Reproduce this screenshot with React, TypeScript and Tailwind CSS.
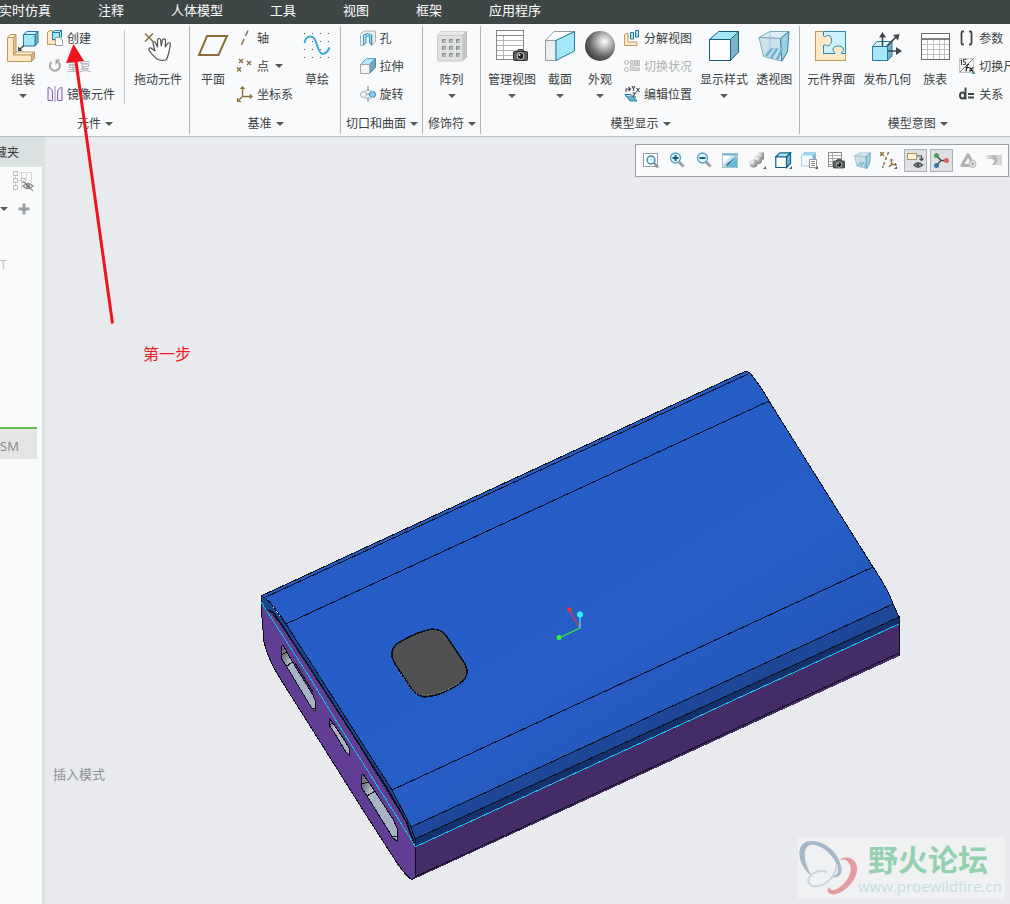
import type { ReactNode } from "react";

const C = {
  edge: "#25799b",
  cyan: "#a6e6fb",
  mid: "#6fb0cf",
  cream: "#fde9c8",
  gold: "#bd9a58",
  brown: "#8a6d3b",
  ink: "#444749",
};

function Svg({ s, children }: { s: number; children: ReactNode }) {
  return (
    <svg width={s} height={s} viewBox={`0 0 ${s} ${s}`} fill="none" className="block shrink-0" aria-hidden="true">
      {children}
    </svg>
  );
}

function Caret() {
  return (
    <svg width="8" height="4" viewBox="0 0 8 4" className="block shrink-0" aria-hidden="true">
      <path d="M0 0H8L4 4Z" fill="#55585a" />
    </svg>
  );
}

/* ---------- large icons ---------- */
const AssembleIcon = () => (
  <Svg s={32}>
    <path d="M.5 7.5 3 4.5H9L6.500 7.500Z" fill="#fff3dc" stroke={C.gold} />
    <path d="M6.500 7.500 9 4.500V22L6.500 25Z" fill="#e3c68d" stroke={C.gold} />
    <path d="M6.500 25 9 22H27.500L24.500 25Z" fill="#fff3dc" stroke={C.gold} />
    <path d="M24.500 25 27.500 22V28.500L24.500 31.500Z" fill="#d8b87a" stroke={C.gold} />
    <path d="M.5 7.500H6.500V25H24.500V31.500H.5Z" fill={C.cream} stroke={C.gold} />
    <path d="M16.500 4.500 20 1.500H31L28 4.500Z" fill="#d2f3fd" stroke={C.edge} />
    <path d="M28 4.500 31 1.500V12.500L28 16Z" fill={C.mid} stroke={C.edge} />
    <path d="M16.500 4.500H28V16H16.500Z" fill={C.cyan} stroke={C.edge} />
    <path d="M17 15.500 12.500 19.500" stroke={C.ink} strokeWidth="1.500" />
    <path d="M11 16.500V21H15.500Z" fill={C.ink} />
  </Svg>
);

const handPath =
  "M15 29C12 26 9 24 7 20Q6.500 17.500 9 18L13 21L11 13Q11 11 13 12L15.500 17V9.500Q17 7.500 18.500 9.500L19.300 16L20.500 9.500Q22.500 8 23.500 10L23.300 17L26 13Q28.500 12 28.300 15L27 22Q26 26 24.500 29.500Q20 31.500 15 29Z";
const DragIcon = () => (
  <Svg s={32}>
    <path d="M3 3.500 11 11.500M11 3.500 3 11.500" stroke={C.brown} strokeWidth="1.500" />
    <path d={handPath} fill="#fff" stroke="#505355" strokeWidth="1.200" strokeLinejoin="round" />
  </Svg>
);

const PlaneIcon = () => (
  <Svg s={32}>
    <path d="M10 6H30L21.500 25H2Z" stroke={C.brown} strokeWidth="2" />
  </Svg>
);

const dots = [3, 11, 19, 27];
const SketchIcon = () => (
  <Svg s={32}>
    {dots.map((y) => dots.map((x) => <rect key={`${x}-${y}`} x={x} y={y} width="1" height="1" fill="#555" />))}
    <path d="M3.500 13C5 5 12 4 15 12C18 21 19 24 22 24C25 23.500 27 21 28.500 17.500" stroke="#3fa9d4" strokeWidth="2" />
  </Svg>
);

const PatternIcon = () => (
  <Svg s={32}>
    <path d="M1.500 5.500 5 1.500H30.500L26.500 5.500Z" fill="#e7e8e9" stroke="#d0d2d3" />
    <path d="M26.500 5.500 30.500 1.500V27L26.500 31Z" fill="#c3c5c6" stroke="#b7b9ba" />
    <path d="M1.500 5.500H26.500V31H1.500Z" fill="#dfe0e1" stroke="#cacccd" />
    {[9, 16, 23].map((y) =>
      [6, 13, 20].map((x) => (
        <g key={`${x}-${y}`}>
          <rect x={x} y={y} width="4" height="4" fill="#b4b6b8" />
          <path d={`M${x + 0.5} ${y + 4}V${y + 0.5}H${x + 4}`} stroke="#8a8d8f" />
        </g>
      )),
    )}
  </Svg>
);

const Camera = ({ x, y, w }: { x: number; y: number; w: number }) => (
  <svg x={x} y={y} width={w} height={w * 0.8} viewBox="0 0 15 12">
    <path d="M4 2.500 5.500.5H9.500L11 2.500Z" fill="#777" stroke="#333" />
    <rect x=".5" y="2.500" width="14" height="9" rx="1" fill="#5c5f61" stroke="#2f3133" />
    <circle cx="7.500" cy="7" r="3.500" fill="#222" stroke="#ccc" />
    <circle cx="6.500" cy="6" r="1" fill="#eee" />
  </svg>
);

const ManageViewIcon = () => (
  <Svg s={32}>
    <rect x=".5" y=".5" width="27" height="29" fill="#fff" stroke="#85888a" />
    <path d="M1 5.500H27M1 10.500H27M1 15.500H27M1 20.500H27M1 25.500H27M7.500 5V29" stroke="#b5b7b9" />
    <path d="M0 5.500H28" stroke="#85888a" />
    <Camera x={17} y={19} w={15} />
  </Svg>
);

const SectionIcon = () => (
  <Svg s={32}>
    <path d="M1.500 10.500 10 1.500H30.500L12 10.500Z" fill="#fff" stroke="#999c9e" />
    <path d="M1.500 10.500H12V30.500H1.500Z" fill="#ecedee" stroke="#999c9e" />
    <path d="M12 10.500 30.500 1.500V21L12 30.500Z" fill={C.cyan} stroke={C.edge} />
  </Svg>
);

const SphereIcon = () => (
  <Svg s={32}>
    <defs>
      <radialGradient id="sphere" cx=".65" cy=".35" r=".65">
        <stop offset="0" stopColor="#fff" />
        <stop offset=".4" stopColor="#b0b0b0" />
        <stop offset=".75" stopColor="#666" />
        <stop offset="1" stopColor="#484848" />
      </radialGradient>
    </defs>
    <circle cx="16" cy="16" r="15" fill="url(#sphere)" />
  </Svg>
);

const CubeIcon = () => (
  <svg width="32" height="32" viewBox="0 0 32 32" fill="none" className="block shrink-0" stroke="#12607f" aria-hidden="true">
    <path d="M1.500 9.500 10.500 1.500H30.500L22.500 9.500Z" fill={C.cyan} />
    <path d="M22.500 9.500 30.500 1.500V22L22.500 30.500Z" fill="#79b3cc" />
    <path d="M1.500 9.500H22.500V30.500H1.500Z" fill="#fff" />
  </svg>
);

const PerspIcon = ({ s = 32 }: { s?: number }) => (
  <svg width={s} height={s} viewBox="0 0 32 32" fill="none" className="block shrink-0" stroke="#7ba9bd" aria-hidden="true">
    <path d="M1 7.500 12 1.500H31L22.500 8.500Z" fill="#d9eef6" />
    <path d="M1 7.500 22.500 8.500 24 31 5.500 26.500Z" fill="#cbe1eb" />
    <path d="M22.500 8.500 31 1.500 29.500 21.500 24 31Z" fill="#9ccfe4" stroke="#367f9e" />
    <path d="M5.500 26.500 12 18.500H29M12 1.500V18.500" stroke="#a5c6d4" />
    <path d="M8 26 14 19M13 28 19 19M19 29.500 24 19" stroke="#6db2cf" strokeWidth="2.500" />
  </svg>
);

const InterfaceIcon = () => (
  <Svg s={32}>
    <rect x=".5" y="1.500" width="30" height="29" fill={C.cream} stroke={C.gold} />
    <path
      d="M8.500 1.500H30.500V23.500H26.500C25.500 22.500 29 21.500 28.500 19C27.500 15 18.500 15 18 19C17.500 21.500 20.500 22.500 20 23.500H8.500V15.500C10.500 13.500 11.500 17 14 15.500C17.500 13.500 17.500 7 14 5.500C11.500 4.500 10.500 8 8.500 6Z"
      fill="#cdf1fc"
      stroke="#2b86a8"
    />
  </Svg>
);

const PublishIcon = () => (
  <Svg s={32}>
    <path d="M1.500 16.500 6 11.500H21L16.500 16.500Z" fill="#d8f3fc" stroke={C.edge} />
    <path d="M16.500 16.500 21 11.500V26L16.500 30.500Z" fill={C.mid} stroke={C.edge} />
    <path d="M1.500 16.500H16.500V30.500H1.500Z" fill={C.cyan} stroke={C.edge} />
    <path d="M11.500 16V6M16 16 25 7M16.500 21H26" stroke={C.ink} strokeWidth="1.600" />
    <path d="M8 7.500 11.500 2 15 7.500ZM22 5 28.500 4 27 10.500ZM25 17 31 21 25 25Z" fill={C.ink} />
  </Svg>
);

const FamilyIcon = () => (
  <Svg s={32}>
    <rect x="2.500" y="3.500" width="28" height="26" fill="#fff" stroke="#66696b" />
    <path d="M8.500 9V29M14.500 9V29M20.500 9V29M25.500 9V29M3 14.500H30M3 19.500H30M3 24.500H30" stroke="#bfc1c3" />
    <path d="M2 9H31" stroke="#55585a" strokeWidth="1.500" />
  </Svg>
);

/* ---------- small icons ---------- */
const CreateIcon = () => (
  <Svg s={16}>
    <path d="M.5 2.500 2.500.5H5.500V10H10V14.500H.5Z" fill={C.cream} stroke={C.gold} />
    <path d="M5.500 2.500 7.500.5H14.500L12.500 2.500Z" fill="#d2f3fd" stroke={C.edge} />
    <path d="M5.500 2.500H12.500V9.500H5.500ZM12.500 2.500 14.500.5V7.500L12.500 9.500Z" fill={C.cyan} stroke={C.edge} />
    <path d="M8.500 7.500H12.500L15.500 10V15.500H8.500Z" fill="#fff" stroke="#9b9ea0" />
  </Svg>
);
const RepeatIcon = () => (
  <Svg s={16}>
    <path d="M4.500 4A5 5 0 1 0 11.500 4.200" stroke="#a3a5a7" strokeWidth="2" />
    <path d="M13.500 1.500H8.500V7Z" fill="#a3a5a7" />
  </Svg>
);
const MirrorIcon = () => (
  <Svg s={16}>
    <path d="M1 1.500C4 1.500 5.500 4 5.500 7V14.500H1ZM15 1.500C12 1.500 10.500 4 10.500 7V14.500H15Z" fill="#f4effa" stroke="#8360a8" />
    <path d="M8 0V16" stroke="#999" />
  </Svg>
);
const AxisIcon = () => (
  <Svg s={16}>
    <path d="M11 .5 8.500 6M7 9 4.500 15" stroke={C.brown} strokeWidth="1.500" />
  </Svg>
);
const PointsIcon = () => (
  <Svg s={16}>
    <path d="M2 1 6 5M6 1 2 5M10 3 14 7M14 3 10 7M0 9.500 4 13.500M4 9.500 0 13.500" stroke={C.brown} strokeWidth="1.400" />
  </Svg>
);
const CsysIcon = () => (
  <Svg s={16}>
    <path d="M5.500 1V10.500H15M5.500 10.500 1 15M3.500 3 5.500 1 7.500 3M13 8.500 15 10.500 13 12.500M.5 12V15.500H4" stroke={C.brown} strokeWidth="1.300" />
  </Svg>
);
const HoleIcon = () => (
  <Svg s={16}>
    <path d="M.5 4.500 4 1H15.500V11.500L12 15.500V4.500M.5 4.500V15.500H3.500" fill="#eceded" stroke="#b0b3b5" />
    <path d="M3.500 15V5Q7.500 2 11.500 5V15L9.500 13V6H6V13Z" fill={C.cyan} stroke="#3a8eaf" />
  </Svg>
);
const ExtrudeIcon = () => (
  <Svg s={16}>
    <path d="M.5 6.500 6.500.5H15.500L9.500 6.500Z" fill="#b9e6f8" stroke="#5fa5c2" />
    <path d="M9.500 6.500 15.500.5V9.500L9.500 15.500Z" fill="#6aaac8" stroke="#4f8ba6" />
    <path d="M.5 6.500H9.500V15.500H.5Z" fill="#f5f5f5" stroke="#a5a7a9" />
  </Svg>
);
const RevolveIcon = () => (
  <Svg s={16}>
    <circle cx="3.500" cy="8.500" r="3" fill="#f3f3f3" stroke="#a5a7a9" />
    <circle cx="12.500" cy="8.500" r="3" fill="#8bd6f2" stroke={C.edge} />
    <path d="M3 5.500Q8 3 13 5.500M3 11.500Q8 14 13 11.500" stroke="#9fcadb" />
    <path d="M8 0V5M8 7V9M8 11V16" stroke="#777" />
  </Svg>
);
const ExplodeIcon = () => (
  <Svg s={16}>
    <path d="M.5 4.500 1.500 3.500H4V12H13V15.500H.5Z" fill={C.cream} stroke={C.gold} />
    <path d="M6.500 2.500H9.500V9H6.500ZM11.500.500H14.500V7H11.500Z" fill={C.cyan} stroke={C.edge} />
  </Svg>
);
const SwitchStateIcon = () => (
  <Svg s={16}>
    <circle cx="2.500" cy="4.500" r="2" stroke="#b5b7b9" />
    <circle cx="2.500" cy="11.500" r="2" stroke="#b5b7b9" />
    <path d="M6.500 2.500H9V10H15.500V12.500H6.500ZM10.500 2.500H12.500V8H10.500ZM13.500 2.500H15.500V8H13.500Z" fill="#dadcdd" stroke="#bbbdbf" />
  </Svg>
);
const EditPosIcon = () => (
  <Svg s={16}>
    <path d="M2 6V3H6M4.500 1 6.500 3 4.500 5M8 0 9.500 2.500 11 0M9.500 2.500V5M12.500 2 15.500 6M15.500 2 12.500 6M8.500 7H11.500L8.500 11H12" stroke={C.ink} strokeWidth="1.100" />
    <path d="M1 8.500H7L13 15H6Z" fill={C.cyan} stroke={C.edge} />
    <path d="M3 11H9M5 13H11" stroke={C.edge} />
  </Svg>
);
const BracketIcon = () => (
  <Svg s={16}>
    <path d="M5 1.500H3.500Q2.500 1.500 2.500 3V13Q2.500 14.500 3.500 14.500H5M10 1.500H11.500Q12.500 1.500 12.500 3V13Q12.500 14.500 11.500 14.500H10" stroke={C.ink} strokeWidth="1.800" />
  </Svg>
);
const SwitchDimIcon = () => (
  <Svg s={16}>
    <rect x=".5" y=".5" width="14" height="14" fill="#f2f3f3" stroke="#c3c5c7" />
    <path d="M1 14 14 1" stroke="#777" />
    <path d="M1.500 2.500 2.500 1.500V7M7.500 1.500H4.500V4H6.500V6.500H4" stroke={C.ink} />
    <path d="M10 6.500Q8.500 6 8 8.500L7 13.500M6.500 9.500H10M10.500 9.500 14 13.500M14 9.500 10.500 13.500" stroke="#222" strokeWidth="1.200" />
    <path d="M15.500 13V16H12.500Z" fill={C.edge} />
  </Svg>
);
const RelationIcon = () => (
  <Svg s={16}>
    <ellipse cx="3.500" cy="9.500" rx="2.500" ry="3" stroke={C.ink} strokeWidth="2" />
    <path d="M6.500 1.500V13.500" stroke={C.ink} strokeWidth="2" />
    <path d="M9 8H15M9 11.500H15" stroke={C.ink} strokeWidth="2" />
  </Svg>
);

/* ---------- view toolbar icons ---------- */
const Lens = ({ mark }: { mark?: string }) => (
  <>
    <path d="M10 10 14.500 14.500" stroke="#9aa0a3" strokeWidth="3" />
    <circle cx="6.500" cy="6" r="5" fill="#dff5fd" stroke="#5aa0bd" strokeWidth="1.300" />
    {mark && <path d={mark} stroke="#165d7e" strokeWidth="2" />}
  </>
);
const Corner = () => <path d="M17 14V17H14Z" fill="#55585a" />;
const refit = (
  <Svg s={17}>
    <rect x=".5" y="1.500" width="14" height="13" fill="#fff" stroke="#9b9ea0" />
    <path d="M11 11 15 15.500" stroke="#8b8f92" strokeWidth="2.500" />
    <circle cx="8" cy="8" r="4" fill="#d8f2fc" stroke="#3a88a9" strokeWidth="1.300" />
  </Svg>
);
const zoomIn = <Svg s={17}><Lens mark="M3.500 6H9.500M6.500 3V9" /></Svg>;
const zoomOut = <Svg s={17}><Lens mark="M3.500 6H9.500" /></Svg>;
const repaint = (
  <Svg s={17}>
    <defs>
      <linearGradient id="repaint" x1="0" y1="0" x2="1" y2="1">
        <stop offset=".3" stopColor="#fff" />
        <stop offset=".7" stopColor="#62b8d8" />
      </linearGradient>
    </defs>
    <rect x=".5" y="1.500" width="15" height="14" fill="url(#repaint)" stroke="#a9c2cd" />
    <path d="M1 2.500H15" stroke="#7ab4cb" strokeWidth="2" />
    <path d="M14 5 7 12 4 14.500 5 12Z" fill="#194d65" />
  </Svg>
);
const shading = (
  <Svg s={17}>
    <defs>
      <radialGradient id="shade" cx=".3" cy=".3" r=".8">
        <stop offset="0" stopColor="#fff" />
        <stop offset="1" stopColor="#777" />
      </radialGradient>
    </defs>
    <path d="M7 3 10 .5H15V7L12 9H7Z" fill="url(#shade)" />
    <circle cx="9" cy="8" r="4" fill="url(#shade)" />
    <circle cx="4.500" cy="11.500" r="4" fill="url(#shade)" />
    <Corner />
  </Svg>
);
const display = (
  <Svg s={17}>
    <g stroke="#12607f" strokeWidth="1.200">
      <path d="M.5 5 5 .800H15.500L11.500 5Z" fill={C.cyan} />
      <path d="M11.500 5 15.500.800V11.500L11.500 15.500Z" fill="#79b3cc" />
      <path d="M.8 5H11.500V15.500H.8Z" fill="#fff" />
    </g>
    <Corner />
  </Svg>
);
const savedViews = (
  <Svg s={17}>
    <path d="M.5 3.500 3.500.5H14.500V11L11.500 14H.5Z" fill="#f3fafd" stroke="#a9cddb" />
    <path d="M.5 3.500 3.500.5H14.500L11.500 3.500Z" fill="#9adaf0" />
    <path d="M11.500 3.500 14.500.5V9L11.500 12Z" fill="#76b8d2" />
    <rect x="8.500" y="7.500" width="7" height="8" fill="#fff" stroke="#999" />
    <path d="M10 9.500H14M10 11.500H14M10 13.500H14" stroke="#888" />
    <Corner />
  </Svg>
);
const viewManager = (
  <Svg s={17}>
    <rect x=".5" y=".5" width="13" height="14" fill="#fff" stroke="#8a8d8f" />
    <path d="M1 3.500H13M1 6.500H13M1 9.500H13M1 12.500H13M4.500 1V14" stroke="#a9abad" />
    <Camera x={5} y={7} w={12} />
  </Svg>
);
const datum = (
  <Svg s={17}>
    <path d="M0 0 4 4M4 0 0 4M8.500 0 7.500 3M6.500 5 5.500 8M11.500 7V12.500H16.500M11.500 12.500 9 15M4.500 10 3.500 13M3 14 2.500 16M14 8.500" stroke={C.brown} strokeWidth="1.400" />
    <path d="M10 8.500 11.500 7 13 8.500M15 11 16.500 12.500 15 14" stroke={C.brown} />
    <Corner />
  </Svg>
);
const annotation = (
  <Svg s={17}>
    <rect x=".5" y="1.500" width="9" height="6" fill="#fdf1d8" stroke="#a99467" />
    <path d="M10 4H14.500V8M12.500 6.500 14.500 8.500 16.500 6.500" stroke={C.ink} strokeWidth="1.200" />
    <path d="M7 13Q11 9 15.500 13Q11 17 7 13Z" fill="#fff" stroke={C.ink} strokeWidth="1.300" />
    <circle cx="11" cy="13" r="1.600" fill={C.ink} />
  </Svg>
);
const spin = (
  <Svg s={17}>
    <path d="M3.500 3.500 8 8.500H14M8 8.500 3.500 13.500" stroke="#45484a" strokeWidth="1.300" />
    <circle cx="3.500" cy="3.500" r="2.500" fill="#4c9b58" />
    <circle cx="13.500" cy="8.500" r="2.500" fill="#d9605c" />
    <circle cx="3.500" cy="13.500" r="2.500" fill="#2d7ba8" />
  </Svg>
);
const simulate = (
  <Svg s={17}>
    <path d="M8 2.500 14 13.500H2Z" stroke="#b0b2b4" strokeWidth="3" strokeLinejoin="round" />
    <circle cx="12.500" cy="12" r="3.500" fill="#e3e4e5" stroke="#b5b7b9" />
    <path d="M11.500 10 14.500 12 11.500 14Z" fill="#a5a7a9" />
  </Svg>
);
const play = (
  <Svg s={17}>
    <defs>
      <linearGradient id="play">
        <stop offset="0" stopColor="#e3e4e6" />
        <stop offset=".7" stopColor="#b3b5b7" />
      </linearGradient>
    </defs>
    <path d="M.5 3H16V13H6Q11 8 6 7H.5Z" fill="#d5d7d9" />
    <path d="M.5 3H9Q14 7 9 13H6Q11 8 6 7H.5Z" fill="url(#play)" />
  </Svg>
);

const viewTools: { label: string; icon: ReactNode; on?: boolean }[] = [
  { label: "重新调整", icon: refit },
  { label: "放大", icon: zoomIn },
  { label: "缩小", icon: zoomOut },
  { label: "重画", icon: repaint },
  { label: "渲染", icon: shading },
  { label: "显示样式", icon: display },
  { label: "已保存方向", icon: savedViews },
  { label: "视图管理器", icon: viewManager },
  { label: "透视图", icon: <PerspIcon s={17} /> },
  { label: "基准显示", icon: datum },
  { label: "注释显示", icon: annotation, on: true },
  { label: "旋转中心", icon: spin, on: true },
  { label: "仿真", icon: simulate },
  { label: "动画", icon: play },
];

/* ---------- ribbon building blocks ---------- */
function Big({ icon, label, caret }: { icon: ReactNode; label: string; caret?: boolean }) {
  return (
    <button type="button" className="flex shrink-0 flex-col items-center px-1 pt-1.5 whitespace-nowrap">
      {icon}
      <span className="mt-2.5 leading-4">{label}</span>
      {caret && <span className="mt-1.5"><Caret /></span>}
    </button>
  );
}

function Row({ icon, label, caret, disabled }: { icon: ReactNode; label: string; caret?: boolean; disabled?: boolean }) {
  return (
    <button type="button" disabled={disabled} className="flex h-7 items-center gap-1 px-1 whitespace-nowrap disabled:text-[#aeb0b2]">
      {icon}
      <span className="pt-0.5 leading-4">{label}</span>
      {caret && <span className="pl-0.5"><Caret /></span>}
    </button>
  );
}

function Rows({ children }: { children: ReactNode }) {
  return <div className="flex shrink-0 flex-col items-stretch">{children}</div>;
}

function Group({ title, children }: { title: string; children: ReactNode }) {
  return (
    <section className="flex shrink-0">
      <div className="flex flex-col">
        <div className="flex h-[84px] justify-center px-[3px]">{children}</div>
        <button type="button" className="flex h-7 items-center justify-center gap-1 pl-[5px] pr-1 pt-1 whitespace-nowrap">
          <span className="leading-4">{title}</span>
          <Caret />
        </button>
      </div>
      <div className="my-0.5 w-px bg-[#b3b6b8]" />
    </section>
  );
}

const menus = ["实时仿真", "注释", "人体模型", "工具", "视图", "框架", "应用程序"];

function Ribbon() {
  return (
    <div className="flex overflow-hidden border-b border-[#b2c0c2] bg-[#f8fafc] text-[12px] text-[#3b3e40]">
      <Group title="元件">
        <Big icon={<AssembleIcon />} label="组装" caret />
        <Rows>
          <Row icon={<CreateIcon />} label="创建" />
          <Row icon={<RepeatIcon />} label="重复" disabled />
          <Row icon={<MirrorIcon />} label="镜像元件" />
        </Rows>
        <div className="mx-[5px] mt-1.5 mb-1 w-px bg-[#c3c6c8]" />
        <Big icon={<DragIcon />} label="拖动元件" />
      </Group>
      <Group title="基准">
        <Big icon={<PlaneIcon />} label="平面" />
        <Rows>
          <Row icon={<AxisIcon />} label="轴" />
          <Row icon={<PointsIcon />} label="点" caret />
          <Row icon={<CsysIcon />} label="坐标系" />
        </Rows>
        <Big icon={<SketchIcon />} label="草绘" />
      </Group>
      <Group title="切口和曲面">
        <Rows>
          <Row icon={<HoleIcon />} label="孔" />
          <Row icon={<ExtrudeIcon />} label="拉伸" />
          <Row icon={<RevolveIcon />} label="旋转" />
        </Rows>
      </Group>
      <Group title="修饰符">
        <Big icon={<PatternIcon />} label="阵列" caret />
      </Group>
      <Group title="模型显示">
        <Big icon={<ManageViewIcon />} label="管理视图" caret />
        <Big icon={<SectionIcon />} label="截面" caret />
        <Big icon={<SphereIcon />} label="外观" caret />
        <Rows>
          <Row icon={<ExplodeIcon />} label="分解视图" />
          <Row icon={<SwitchStateIcon />} label="切换状况" disabled />
          <Row icon={<EditPosIcon />} label="编辑位置" />
        </Rows>
        <Big icon={<CubeIcon />} label="显示样式" caret />
        <Big icon={<PerspIcon />} label="透视图" />
      </Group>
      <Group title="模型意图">
        <Big icon={<InterfaceIcon />} label="元件界面" />
        <Big icon={<PublishIcon />} label="发布几何" />
        <Big icon={<FamilyIcon />} label="族表" />
        <Rows>
          <Row icon={<BracketIcon />} label="参数" />
          <Row icon={<SwitchDimIcon />} label="切换尺寸" />
          <Row icon={<RelationIcon />} label="关系" />
        </Rows>
      </Group>
    </div>
  );
}

function Sidebar() {
  return (
    <aside className="flex w-[45px] shrink-0 flex-col overflow-hidden border-r-[3px] border-[#dae1e1] bg-[#f8fafc]">
      <div className="-mr-[3px] flex h-[30px] items-center bg-[#dae1e1] pt-0.5 text-[12px] whitespace-nowrap text-[#3b3e40]">
        <span className="-ml-[5px]">藏夹</span>
      </div>
      <div className="flex h-7 items-center justify-end pr-2">
        <button type="button" aria-label="树过滤器">
          <Svg s={21}>
            <path d="M2.500 4V17M4 9.500H9M7 1.500H13.500V8M11 1.500H18.500V12M8.500 2V18" stroke="#d4d6d7" />
            <path d="M.5.500H4.500V4.500H.5ZM.5 7.500H4.500V11.500H.5ZM.5 14.500H4.500V18.500H.5ZM8.500 7.500H12.500V11.500H8.500Z" fill="#fff" stroke="#b9bbbd" />
            <path d="M10 15Q15 10 20 15Q15 20 10 15Z" fill="#eee" stroke="#8c8f91" strokeWidth="1.500" />
            <circle cx="15" cy="15" r="2" fill="#8c8f91" />
            <path d="M10 10 20 20" stroke="#666" />
          </Svg>
        </button>
      </div>
      <div className="flex h-7 items-center justify-between pr-3">
        <button type="button" aria-label="展开"><Caret /></button>
        <button type="button" aria-label="添加">
          <Svg s={12}>
            <path d="M6 .5V11.500M.5 6H11.500" stroke="#9b9ea0" strokeWidth="3" />
          </Svg>
        </button>
      </div>
      <div className="mt-8 h-5 font-['Open_Sans',sans-serif] text-[12px] leading-5 text-[#c0c2c3]">T</div>
      <div className="mt-[152px] mr-[5px] flex h-8 items-center border-t-2 border-[#68bd4a] bg-[#e4e4e4] pt-1.5 font-['Open_Sans',sans-serif] text-[13px] text-[#85888a]">
        SM
      </div>
    </aside>
  );
}

function Model() {
  return (
    <svg viewBox="45 137 965 767" className="block h-auto w-full" role="img" aria-label="三维模型">
      <defs>
        <linearGradient id="top" gradientUnits="userSpaceOnUse" x1="505" y1="480" x2="660" y2="735">
          <stop offset="0" stopColor="#265cc5" />
          <stop offset=".7" stopColor="#275dc6" />
          <stop offset="1" stopColor="#2458bb" />
        </linearGradient>
        <linearGradient id="port" x1="0" y1="0" x2="1" y2="1">
          <stop offset="0" stopColor="#60656d" />
          <stop offset=".13" stopColor="#767d88" />
          <stop offset=".26" stopColor="#b4bcc8" />
          <stop offset=".36" stopColor="#a7b3c5" />
          <stop offset="1" stopColor="#a7b3c5" />
        </linearGradient>
      </defs>
      <g shapeRendering="crispEdges" stroke="#0d1018" fill="none">
        <path d="M261 600 261 606 264 642Q268 660 283 683L363 810 397 863Q406 876 412 880L416 877 415 846 407 823 350 730 285 629Z" fill="#623d94" />
        <path d="M415 846 899 623V656L412 880 415 877Z" fill="#452b68" stroke="none" />
        <path d="M415 877 899 653V623" />
        <path d="M411 827 893 604 899 617V623L415 846Z" fill="#1d4899" stroke="none" />
        <path d="M415 839 899 617V623L415 846Z" fill="#14316b" stroke="none" />
        <path d="M261 596 266 598 286 624 392 790 411 827 415 839V846L407 823 350 730 310 668 277 618 268 611 261 604Z" fill="#1d4692" stroke="none" />
        <path d="M261 596 746 371 750 373Q760 385 769 401L873 567Q889 591 893 604L411 827 392 790 286 624Q270 599 261 596Z" fill="url(#top)" />
        <path d="M261 596V606M411 827 415 839V846" />
        <path d="M266 597 748 374M286 624 769 401M392 790 873 567M411 827 893 604 899 617M415 839 899 617V656" />
        <path d="M266 610Q274 611 277 618L310 668 350 730 387 788 407 823 414 843" strokeWidth="1.600" />
        <path d="M261 602 270 616 310 678 340 727 373 779 397 817 415 846" stroke="#09bfe5" />
        <path d="M415 847 899 624" stroke="#09c4ee" />
        <path d="M415 847V877" />
        <path d="M392 657Q391 646 400 642Q416 632 432 629Q442 629 447 637L465 664Q470 674 463 681Q444 696 424 697Q416 695 411 688L395 664Z" fill="#515153" strokeWidth="1.500" />
        <path d="M396 667 411 689Q416 695 424 695Q445 694 461 681" stroke="#7a7d81" strokeDasharray="1 2" />
        <path d="M283 645 281 647V658L287 667 311 707 315 711 316 703 313 695 292 661Z" fill="url(#port)" />
        <path d="M281 655 287 652M286 667 292 662M295 663 313 692M312 708 316 708" />
        <path d="M329 718V725L332 729 346 752 349 755V748L345 741 333 723Z" fill="url(#port)" />
        <path d="M329 725 333 723" />
        <path d="M363 774 361 776V787L367 796 393 838 397 841V828L393 819 374 790Z" fill="url(#port)" />
        <path d="M362 784 368 782M367 796 375 791M393 837 397 836" />
      </g>
      <g strokeWidth="1.300">
        <path d="M580 628 569 610" stroke="#ed3340" />
        <path d="M580 628V615" stroke="#33e7ff" />
        <path d="M580 628 559 638" stroke="#33f33c" />
        <circle cx="569.500" cy="609.500" r="2.300" fill="#ed3340" />
        <circle cx="580" cy="614.500" r="3" fill="#33f0ff" />
        <circle cx="559" cy="637.500" r="2.500" fill="#33f33c" />
      </g>
    </svg>
  );
}

function Watermark() {
  return (
    <div className="absolute right-[5px] bottom-[5px] flex h-[62px] w-[207px] items-center bg-[#f0f1f3]">
      <svg viewBox="0 0 60 62" className="h-[62px] w-[60px] shrink-0" aria-hidden="true">
        <path
          fillRule="evenodd"
          fill="#a6b8c7"
          d="M16 41C-1 30-3 8 9 4.500C24 1 40 14 43 29Q46 42 33 40Q43 38 39 28C34 15 18 4 10 9C3 15 8 32 16 41Z"
        />
        <path
          fillRule="evenodd"
          fill="#e39da1"
          d="M41 23C50 17 60 22 59 34C57 48 40 60 33 57Q27 55 31 50Q33 55 39 52C48 47 55 36 52 28Q49 21 41 23Z"
        />
        <path d="M39 27C37 43 24 51 14 49Q7 45 13 38Q20 32 29 35" fill="none" stroke="#cbd3dc" strokeWidth="2" />
      </svg>
      <div className="flex flex-col whitespace-nowrap">
        <span className="pl-2.5 font-['Noto_Sans_CJK_SC',sans-serif] text-[30px] leading-9 font-bold text-[#95d1b0]">野火论坛</span>
        <span className="font-['Open_Sans',sans-serif] text-[15px] leading-5 text-[#c3dfe1]">www.proewildfire.cn</span>
      </div>
    </div>
  );
}

export default function App() {
  return (
    <div className="relative flex min-h-screen w-full flex-col overflow-hidden bg-[#e8eaee] font-['Liberation_Sans','Noto_Sans_CJK_SC',sans-serif]">
      <nav className="-ml-px flex h-6 items-center gap-[47px] overflow-hidden bg-[#3e4646] pb-0.5 text-[13px] whitespace-nowrap text-white">
        {menus.map((m) => (
          <button key={m} type="button" className="shrink-0">{m}</button>
        ))}
      </nav>
      <Ribbon />
      <div className="flex flex-1">
        <Sidebar />
        <main className="relative min-w-0 flex-1">
          <Model />
          <div className="absolute top-[7px] right-px flex h-[33px] w-[374px] items-center justify-between border border-[#9da0a2] bg-[#f8fafc] pl-1 pr-0.5">
            {viewTools.map((t) => (
              <button
                key={t.label}
                type="button"
                aria-label={t.label}
                aria-pressed={t.on}
                className="flex size-[23px] items-center justify-center aria-pressed:border aria-pressed:border-[#adb0b2] aria-pressed:bg-[#dfe0e3]"
              >
                {t.icon}
              </button>
            ))}
          </div>
          <p className="absolute top-[206px] left-[98px] text-[16px] leading-6 text-[#ee1c25]">第一步</p>
          <p className="absolute top-[628px] left-2 text-[13px] leading-5 text-[#8d9196]">插入模式</p>
          <Watermark />
        </main>
      </div>
      <svg width="60" height="284" viewBox="60 42 60 284" className="pointer-events-none absolute top-[42px] left-[60px]" aria-hidden="true">
        <path d="M112.500 323.500 75.500 58" stroke="#ee141d" strokeWidth="3" />
        <path d="M73.500 44 66 63 84 61Z" fill="#ee141d" />
      </svg>
    </div>
  );
}
